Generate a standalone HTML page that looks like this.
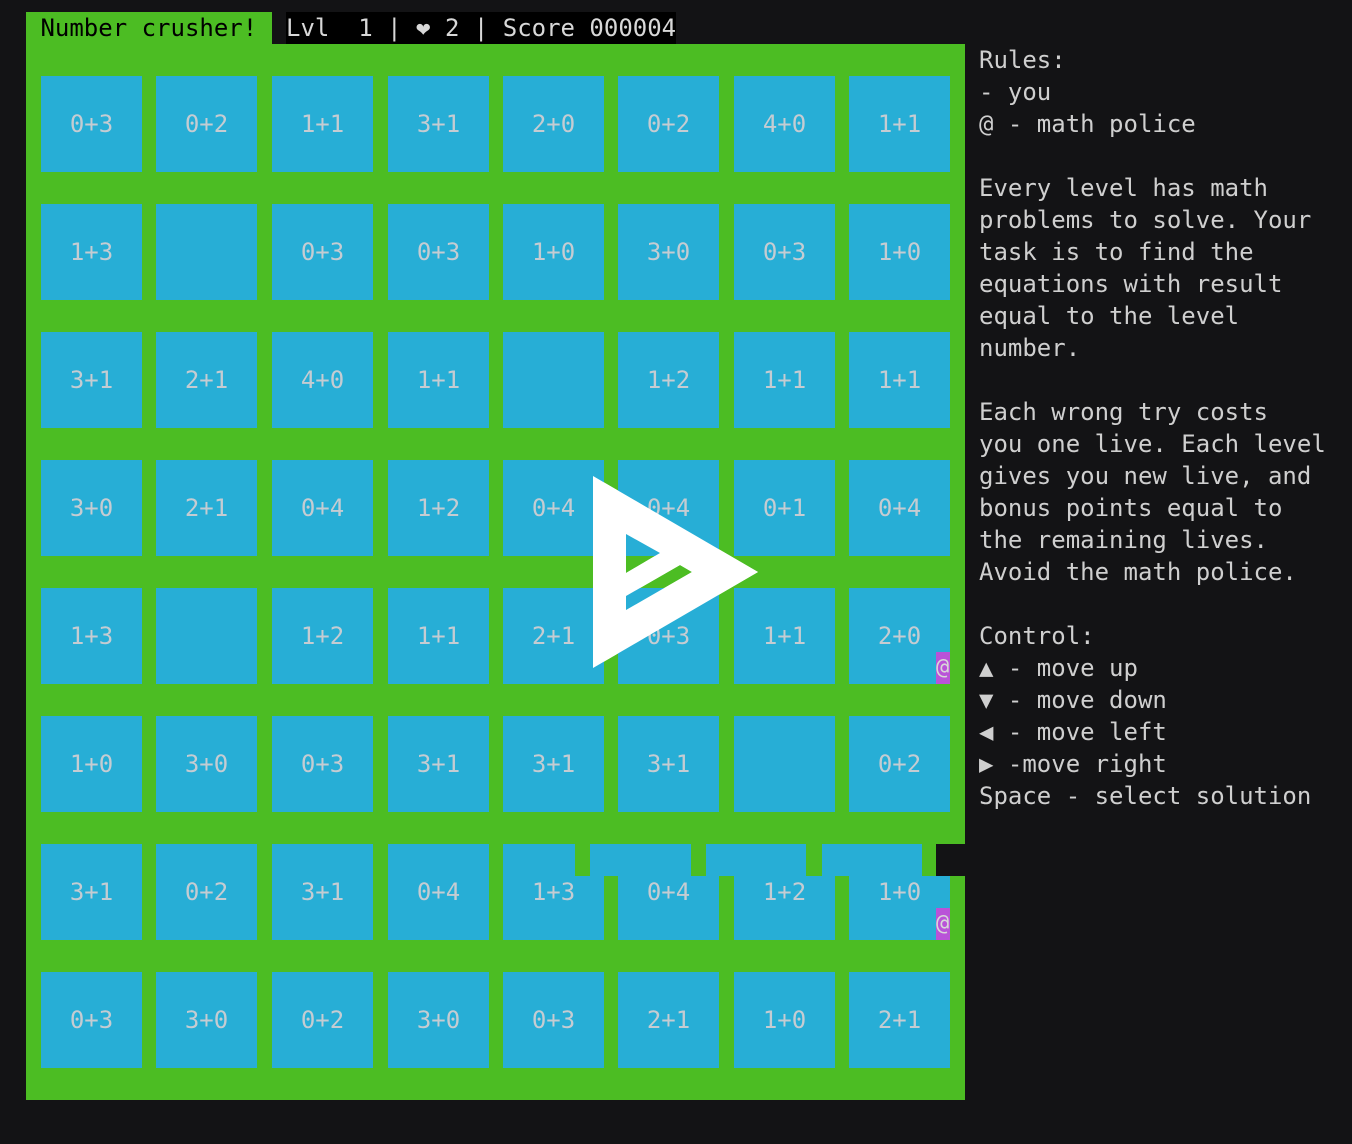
<!DOCTYPE html>
<html><head><meta charset="utf-8"><style>
body{margin:0;width:1352px;height:1144px;background:#131315;position:relative;overflow:hidden;font-family:"DejaVu Sans Mono","Liberation Mono",monospace;font-size:24px;}
.a{position:absolute}
.c{position:absolute;width:101px;height:96px;background:#27aed6;color:#c5ccd2;text-align:center;line-height:96px;}
.g{background:linear-gradient(transparent 32px,#27aed6 32px);}
pre{margin:0;font:inherit}
</style></head><body>
<div class="a" style="left:26px;top:12px;width:246px;height:32px;background:#4cbd23;color:#000;line-height:32px;"><pre> Number crusher!</pre></div>
<div class="a" style="left:286px;top:12px;width:390px;height:32px;background:#000;color:#d8d8d8;line-height:32px;"><pre>Lvl  1 | ❤ 2 | Score 000004</pre></div>
<div class="a" style="left:26px;top:44px;width:939px;height:1056px;background:#4cbd23"></div>
<div id="g"></div>
<div class="a" style="left:503px;top:844px;width:72px;height:32px;background:#27aed6"></div>
<div class="a" style="left:590px;top:844px;width:101px;height:32px;background:#27aed6"></div>
<div class="a" style="left:706px;top:844px;width:100px;height:32px;background:#27aed6"></div>
<div class="a" style="left:822px;top:844px;width:100px;height:32px;background:#27aed6"></div>
<div class="a" style="left:936px;top:844px;width:29px;height:32px;background:#131315"></div>
<div class="a" style="left:936px;top:652px;width:14px;height:32px;background:#b953d8;color:#d8d8d8;line-height:32px;overflow:hidden;font-size:22px">@</div>
<div class="a" style="left:936px;top:908px;width:14px;height:32px;background:#b953d8;color:#d8d8d8;line-height:32px;overflow:hidden;font-size:22px">@</div>
<svg class="a" style="left:0;top:0" width="1352" height="1144">
<path fill="#fff" fill-rule="evenodd" d="M593 476 L758 572 L593 668 Z M626 534 L660 553 L626 573 Z M626 596 L680 565 L692 572 L626 610 Z"/>
</svg>
<div class="a" style="left:979px;top:44px;color:#cfcfcf;line-height:32px"><pre>Rules:
- you
@ - math police

Every level has math
problems to solve. Your
task is to find the
equations with result
equal to the level
number.

Each wrong try costs
you one live. Each level
gives you new live, and
bonus points equal to
the remaining lives.
Avoid the math police.

Control:
▲ - move up
▼ - move down
◀ - move left
▶ -move right
Space - select solution</pre></div>
<div class="c" style="left:41px;top:76px">0+3</div><div class="c" style="left:156px;top:76px">0+2</div><div class="c" style="left:272px;top:76px">1+1</div><div class="c" style="left:388px;top:76px">3+1</div><div class="c" style="left:503px;top:76px">2+0</div><div class="c" style="left:618px;top:76px">0+2</div><div class="c" style="left:734px;top:76px">4+0</div><div class="c" style="left:849px;top:76px">1+1</div>
<div class="c" style="left:41px;top:204px">1+3</div><div class="c" style="left:156px;top:204px"></div><div class="c" style="left:272px;top:204px">0+3</div><div class="c" style="left:388px;top:204px">0+3</div><div class="c" style="left:503px;top:204px">1+0</div><div class="c" style="left:618px;top:204px">3+0</div><div class="c" style="left:734px;top:204px">0+3</div><div class="c" style="left:849px;top:204px">1+0</div>
<div class="c" style="left:41px;top:332px">3+1</div><div class="c" style="left:156px;top:332px">2+1</div><div class="c" style="left:272px;top:332px">4+0</div><div class="c" style="left:388px;top:332px">1+1</div><div class="c" style="left:503px;top:332px"></div><div class="c" style="left:618px;top:332px">1+2</div><div class="c" style="left:734px;top:332px">1+1</div><div class="c" style="left:849px;top:332px">1+1</div>
<div class="c" style="left:41px;top:460px">3+0</div><div class="c" style="left:156px;top:460px">2+1</div><div class="c" style="left:272px;top:460px">0+4</div><div class="c" style="left:388px;top:460px">1+2</div><div class="c" style="left:503px;top:460px">0+4</div><div class="c" style="left:618px;top:460px">0+4</div><div class="c" style="left:734px;top:460px">0+1</div><div class="c" style="left:849px;top:460px">0+4</div>
<div class="c" style="left:41px;top:588px">1+3</div><div class="c" style="left:156px;top:588px"></div><div class="c" style="left:272px;top:588px">1+2</div><div class="c" style="left:388px;top:588px">1+1</div><div class="c" style="left:503px;top:588px">2+1</div><div class="c" style="left:618px;top:588px">0+3</div><div class="c" style="left:734px;top:588px">1+1</div><div class="c" style="left:849px;top:588px">2+0</div>
<div class="c" style="left:41px;top:716px">1+0</div><div class="c" style="left:156px;top:716px">3+0</div><div class="c" style="left:272px;top:716px">0+3</div><div class="c" style="left:388px;top:716px">3+1</div><div class="c" style="left:503px;top:716px">3+1</div><div class="c" style="left:618px;top:716px">3+1</div><div class="c" style="left:734px;top:716px"></div><div class="c" style="left:849px;top:716px">0+2</div>
<div class="c" style="left:41px;top:844px">3+1</div><div class="c" style="left:156px;top:844px">0+2</div><div class="c" style="left:272px;top:844px">3+1</div><div class="c" style="left:388px;top:844px">0+4</div><div class="c g" style="left:503px;top:844px">1+3</div><div class="c g" style="left:618px;top:844px">0+4</div><div class="c g" style="left:734px;top:844px">1+2</div><div class="c g" style="left:849px;top:844px">1+0</div>
<div class="c" style="left:41px;top:972px">0+3</div><div class="c" style="left:156px;top:972px">3+0</div><div class="c" style="left:272px;top:972px">0+2</div><div class="c" style="left:388px;top:972px">3+0</div><div class="c" style="left:503px;top:972px">0+3</div><div class="c" style="left:618px;top:972px">2+1</div><div class="c" style="left:734px;top:972px">1+0</div><div class="c" style="left:849px;top:972px">2+1</div>
<svg class="a" style="left:0;top:0;pointer-events:none" width="1352" height="1144">
<path fill="#fff" fill-rule="evenodd" d="M593 476 L758 572 L593 668 Z M626 534 L660 553 L626 573 Z M626 596 L680 565 L692 572 L626 610 Z"/>
</svg>
<div class="a" style="left:936px;top:652px;width:14px;height:32px;background:#b953d8;color:#d8d8d8;line-height:32px;overflow:hidden;font-size:22px">@</div>
<div class="a" style="left:936px;top:908px;width:14px;height:32px;background:#b953d8;color:#d8d8d8;line-height:32px;overflow:hidden;font-size:22px">@</div>
</body></html>
